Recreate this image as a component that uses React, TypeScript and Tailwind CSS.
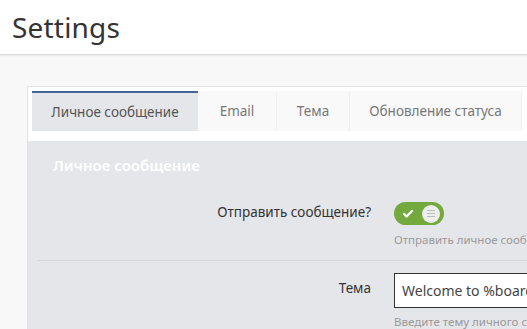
import { Check } from "lucide-react";

const tabs = [
  { label: "Личное сообщение", width: "w-[166px]", active: true },
  { label: "Email", width: "w-[79px]", active: false },
  { label: "Тема", width: "w-[73px]", active: false },
  { label: "Обновление статуса", width: "w-[172px]", active: false },
];

function Toggle() {
  return (
    <div className="relative h-[23px] w-[50px] rounded-full bg-[#74aa3d]">
      <Check className="absolute left-[8px] top-[5.5px] h-[12px] w-[12px] text-white" strokeWidth={4.5} />
      <span className="absolute right-[4px] top-[2.5px] flex h-[18px] w-[18px] flex-col items-center justify-center gap-[2px] rounded-full bg-[#eeeeee]">
        <span className="h-px w-[8px] bg-[#bbb]" />
        <span className="h-px w-[8px] bg-[#bbb]" />
        <span className="h-px w-[8px] bg-[#bbb]" />
      </span>
    </div>
  );
}

export default function App() {
  return (
    <div className="h-screen overflow-hidden bg-[#f8f8f8] font-['Noto_Sans',sans-serif]">
      <header className="flex h-[55px] items-center border-b border-[#dcdcdc] bg-white px-[12px] shadow-[0_1px_2px_rgba(0,0,0,0.08)]">
        <h1 className="text-[28px] leading-none tracking-[0.2px] text-[#333]">Settings</h1>
      </header>

      <div className="pl-[27px] pt-[31px]">
        <div className="w-[560px] border border-[#e2e2e2] bg-white">
          <div className="flex pl-[4px] pt-[4px]">
            {tabs.map((tab) =>
              tab.active ? (
                <div
                  key={tab.label}
                  className={`${tab.width} flex h-[40px] shrink-0 items-center justify-center border-t-2 border-[#46639a] bg-[#e5e6ea] text-[13.5px] text-[#555]`}
                >
                  {tab.label}
                </div>
              ) : (
                <div
                  key={tab.label}
                  className={`${tab.width} flex h-[40px] shrink-0 items-center justify-center border-r border-[#f0f0f0] bg-[#f9f9f9] text-[13.5px] text-[#777]`}
                >
                  {tab.label}
                </div>
              )
            )}
          </div>

          <div className="mt-[10px] bg-[#e5e6ea] pb-[20px]">
            <div className="pl-[25px] pt-[14px] text-[15px] font-semibold leading-[20px] text-white">
              Личное сообщение
            </div>

            <div className="mx-[10px] mt-[27px] border-b border-[#d6d7db] pb-[12px]">
              <div className="flex items-start">
                <div className="w-[333px] shrink-0 text-right text-[13.5px] leading-[20px] text-[#333]">
                  Отправить сообщение?
                </div>
                <div className="ml-[23px] flex min-w-0 flex-col">
                  <Toggle />
                  <div className="mt-[7px] overflow-hidden whitespace-nowrap text-[11.5px] leading-[16px] text-[#999]">
                    Отправить личное сообщение
                  </div>
                </div>
              </div>
            </div>

            <div className="mx-[10px] pt-[12px]">
              <div className="flex items-start">
                <div className="mt-[5px] w-[333px] shrink-0 text-right text-[13.5px] leading-[20px] text-[#333]">
                  Тема
                </div>
                <div className="ml-[23px] flex min-w-0 flex-col">
                  <div className="flex h-[35px] w-[300px] items-center overflow-hidden whitespace-nowrap border border-[#333] bg-white px-[7px] text-[14px] text-[#444]">
                    Welcome to %board_name%
                  </div>
                  <div className="mt-[6px] overflow-hidden whitespace-nowrap text-[11.5px] leading-[16px] text-[#999]">
                    Введите тему личного сообщения
                  </div>
                </div>
              </div>
            </div>
          </div>
        </div>
      </div>
    </div>
  );
}
